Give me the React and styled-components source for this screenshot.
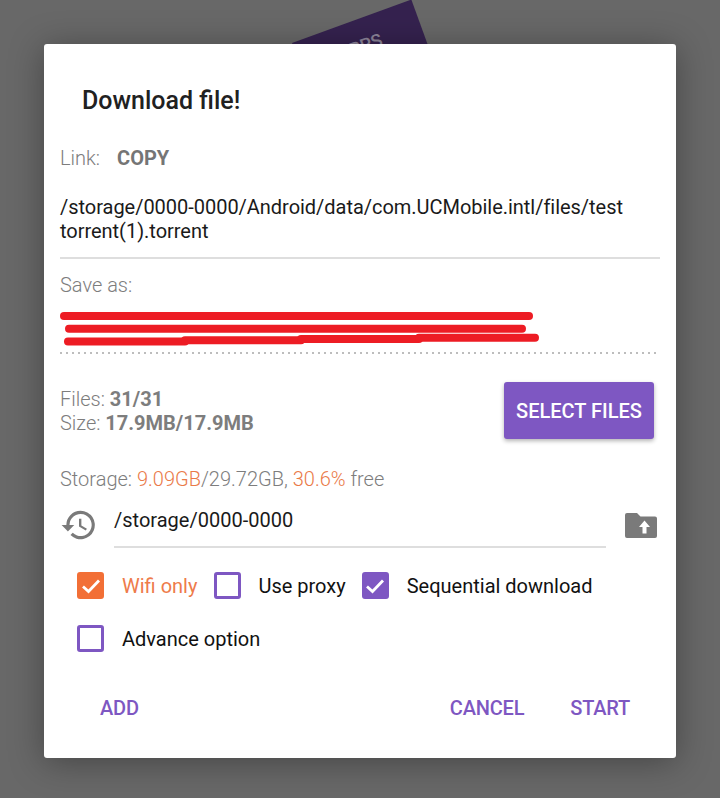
import React from "react";
import styled, { createGlobalStyle } from "styled-components";

const Global = createGlobalStyle`
  html, body { margin: 0; padding: 0; }
  body { font-family: Roboto, "Liberation Sans", sans-serif; background: #686868; }
`;

const Screen = styled.div`
  position: relative;
  width: 720px;
  height: 798px;
  overflow: hidden;
  box-sizing: border-box;
  padding: 44px 44px 40px;
  background: #686868;
`;

const BehindCard = styled.div`
  position: absolute;
  left: 292px;
  top: 43px;
  width: 127px;
  height: 60px;
  background: #35224f;
  transform-origin: 0 0;
  transform: rotate(-20deg);
  color: #8d8599;
  font-size: 18px;
  font-weight: 500;
  padding-top: 16px;
  padding-left: 52px;
  box-sizing: border-box;
`;

const Dialog = styled.div`
  position: relative;
  box-sizing: border-box;
  width: 632px;
  height: 714px;
  background: #ffffff;
  border-radius: 3px;
  padding: 0 16px;
  box-shadow: 0 4px 34px rgba(0, 0, 0, 0.34);
`;

const Title = styled.h1`
  margin: 0;
  padding: 43px 0 0 22px;
  font-size: 25px;
  line-height: 28px;
  font-weight: 500;
  color: #212121;
`;

const LinkRow = styled.div`
  display: flex;
  gap: 17px;
  margin-top: 31px;
  font-size: 20px;
  line-height: 24px;
`;

const Muted = styled.span`
  color: #7d7d7d;
  font-weight: ${(p) => (p.$bold ? 700 : 300)};
`;

const Copy = styled.span`
  color: #757575;
  font-weight: 700;
`;

const PathText = styled.div`
  margin-top: 25px;
  padding-bottom: 14px;
  border-bottom: 2px solid #dedede;
  font-size: 20px;
  line-height: 24px;
  letter-spacing: -0.03px;
  color: #1a1a1a;
`;

const SaveLabel = styled.div`
  margin-top: 14px;
  font-size: 20px;
  font-weight: 300;
  line-height: 24px;
  color: #7d7d7d;
`;

const Scribble = styled.svg`
  display: block;
  width: 600px;
  height: 36px;
  margin-top: 14px;
`;

const DottedRule = styled.div`
  height: 2px;
  margin: 5px 4px 0 0;
  background: repeating-linear-gradient(90deg, #bdbdbd 0 2px, transparent 2px 6px);
`;

const InfoRow = styled.div`
  display: flex;
  align-items: flex-start;
  justify-content: space-between;
  margin-top: 28px;
  padding-right: 6px;
`;

const InfoText = styled.div`
  padding-top: 5px;
  font-size: 20px;
  font-weight: 300;
  line-height: 24px;
  color: #7d7d7d;
`;

const SelectButton = styled.button`
  width: 150px;
  height: 57px;
  padding: 0;
  border: 0;
  border-radius: 3px;
  background: #7e57c2;
  color: #ffffff;
  font-family: inherit;
  font-size: 20px;
  font-weight: 500;
  box-shadow: 0 2px 4px rgba(0, 0, 0, 0.3);
`;

const StorageLine = styled.div`
  margin-top: 28px;
  font-size: 20px;
  font-weight: 300;
  line-height: 24px;
  color: #7d7d7d;
`;

const Accent = styled.span`
  color: #ea7a48;
`;

const PathRow = styled.div`
  display: flex;
  align-items: flex-start;
  margin-top: 11px;
`;

const HistoryIcon = styled.svg`
  flex: none;
  width: 38px;
  height: 38px;
  margin-top: 4px;
  fill: #7a7a7a;
`;

const PathField = styled.div`
  flex: none;
  width: 492px;
  height: 46px;
  box-sizing: border-box;
  margin-left: 16px;
  padding-top: 6px;
  border-bottom: 2px solid #dedede;
  font-size: 20px;
  line-height: 24px;
  color: #1a1a1a;
`;

const FolderIcon = styled.svg`
  flex: none;
  width: 32px;
  height: 25px;
  margin: 11px 0 0 19px;
`;

const Options = styled.div`
  display: flex;
  flex-direction: column;
  gap: 26px;
  margin-top: 24px;
  padding-left: 17px;
`;

const OptionRow = styled.div`
  display: flex;
  align-items: center;
  height: 27px;
`;

const Option = styled.div`
  display: flex;
  align-items: center;
  margin-right: ${(p) => p.$gap || 0}px;
  font-size: 20px;
  color: ${(p) => (p.$orange ? "#ee7b4b" : "#111111")};
`;

const Box = styled.span`
  display: flex;
  align-items: center;
  justify-content: center;
  box-sizing: border-box;
  width: 27px;
  height: 27px;
  margin-right: ${(p) => p.$space || 18}px;
  border-radius: 3px;
  border: 3px solid ${(p) => p.$color};
  background: ${(p) => (p.$checked ? p.$color : "transparent")};
`;

const Actions = styled.div`
  display: flex;
  align-items: center;
  margin-top: 44px;
  padding-left: 40px;
`;

const ActionButton = styled.span`
  margin-left: ${(p) => p.$left || 0}px;
  font-size: 20px;
  line-height: 24px;
  font-weight: 500;
  letter-spacing: -0.2px;
  color: #7e57c2;
`;

const Tick = () => (
  <svg width="20" height="20" viewBox="0 0 20 20" fill="none">
    <path d="M2 10.5 L7.5 15.5 L18 4.5" stroke="#fff" strokeWidth="2.8" />
  </svg>
);

const ORANGE = "#f26f36";
const PURPLE = "#7e57c2";

const App = () => {
  return (
    <Screen>
      <Global />
      <BehindCard>RPS</BehindCard>
      <Dialog>
        <Title>Download file!</Title>
        <LinkRow>
          <Muted>Link:</Muted>
          <Copy>COPY</Copy>
        </LinkRow>
        <PathText>
          /storage/0000-0000/Android/data/com.UCMobile.intl/files/test
          <br />
          torrent(1).torrent
        </PathText>
        <SaveLabel>Save as:</SaveLabel>
        <Scribble viewBox="0 0 600 36">
          <g fill="none" stroke="#ed1c24" strokeWidth="8" strokeLinecap="round">
            <path d="M4 5 H469" />
            <path d="M9 17.7 H462" />
            <path d="M8 30.6 H125" />
            <path d="M125 29.3 H241" />
            <path d="M241 28 H359" />
            <path d="M359 26.7 H475" />
          </g>
        </Scribble>
        <DottedRule />
        <InfoRow>
          <InfoText>
            Files: <Muted $bold>31/31</Muted>
            <br />
            Size: <Muted $bold>17.9MB/17.9MB</Muted>
          </InfoText>
          <SelectButton>SELECT FILES</SelectButton>
        </InfoRow>
        <StorageLine>
          Storage: <Accent>9.09GB</Accent>/29.72GB, <Accent>30.6%</Accent> free
        </StorageLine>
        <PathRow>
          <HistoryIcon viewBox="0 0 24 24">
            <path d="M13 3a9 9 0 0 0-9 9H1l3.89 3.89.07.14L9 12H6a7 7 0 1 1 2.05 4.95l-1.42 1.42A9 9 0 1 0 13 3zm-1 5v5l4.28 2.54.72-1.21-3.5-2.08V8H12z" />
          </HistoryIcon>
          <PathField>/storage/0000-0000</PathField>
          <FolderIcon viewBox="0 0 32 25">
            <path
              d="M2 0h10l3.5 3.5H30a2 2 0 0 1 2 2V23a2 2 0 0 1-2 2H2a2 2 0 0 1-2-2V2a2 2 0 0 1 2-2z"
              fill="#7a7a7a"
            />
            <path d="M19.5 7.5l5.5 6.5h-3.5v6.5h-4V14H14z" fill="#fff" />
          </FolderIcon>
        </PathRow>
        <Options>
          <OptionRow>
            <Option $orange $gap={17}>
              <Box $color={ORANGE} $checked>
                <Tick />
              </Box>
              Wifi only
            </Option>
            <Option $gap={16}>
              <Box $color={PURPLE} $space={17} />
              Use proxy
            </Option>
            <Option>
              <Box $color={PURPLE} $checked>
                <Tick />
              </Box>
              Sequential download
            </Option>
          </OptionRow>
          <OptionRow>
            <Option>
              <Box $color={PURPLE} />
              Advance option
            </Option>
          </OptionRow>
        </Options>
        <Actions>
          <ActionButton>ADD</ActionButton>
          <ActionButton $left={311}>CANCEL</ActionButton>
          <ActionButton $left={46}>START</ActionButton>
        </Actions>
      </Dialog>
    </Screen>
  );
};

export default App;
